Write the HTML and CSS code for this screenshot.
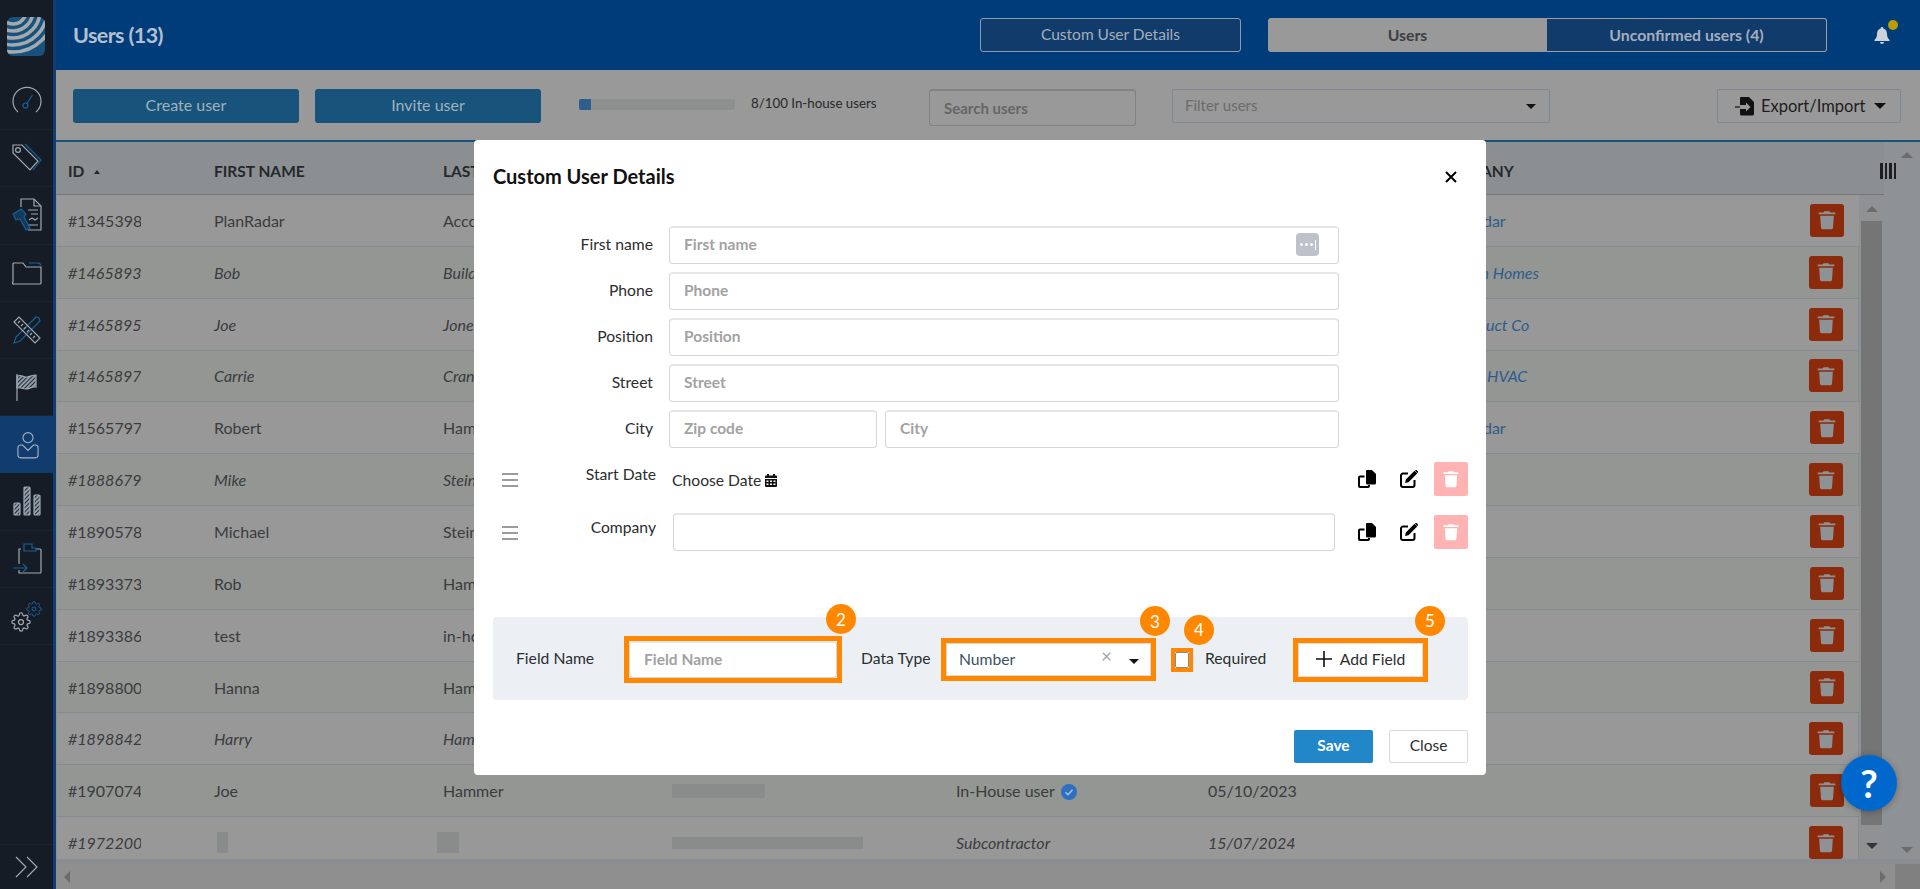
FILE: index.html
```html
<!DOCTYPE html>
<html lang="en">
<head>
    <meta charset="UTF-8">
    <title>Users</title>
    <link rel="stylesheet" href="styles.css">
</head>
<body>

    <svg class="icon-defs" width="0" height="0">
        <symbol id="i-trash" viewBox="0 0 24 24">
            <path fill="currentColor" d="M9 1.500h6l1 1.500h6v2.200H2V3h6z"/>
            <path fill="currentColor" d="M3.800 7h16.400l-1 14.200a2.200 2.200 0 0 1-2.200 1.800H7a2.200 2.200 0 0 1-2.200-1.800z"/>
        </symbol>
        <symbol id="i-copy" viewBox="0 0 18 18">
            <path fill="none" stroke="currentColor" stroke-width="2" d="M6.500 6.500H2a1 1 0 0 0-1 1V16a1 1 0 0 0 1 1h8a1 1 0 0 0 1-1v-1"/>
            <path fill="currentColor" d="M8 1a1 1 0 0 1 1-1h5l4 4v9a1.500 1.500 0 0 1-1.500 1.500H9.500A1.500 1.500 0 0 1 8 13z"/>
        </symbol>
        <symbol id="i-edit" viewBox="0 0 18 18">
            <path fill="none" stroke="currentColor" stroke-width="2" d="M8 3.500H3a2 2 0 0 0-2 2V15a2 2 0 0 0 2 2h9.500a2 2 0 0 0 2-2v-5"/>
            <path fill="currentColor" d="M14.500 0.800l2.700 2.700-8.700 8.700-3.400 0.700 0.700-3.400zM15.500 0.200a1 1 0 0 1 1.300 0l1 1a1 1 0 0 1 0 1.300l-0.600 0.400-2.300-2.300z"/>
        </symbol>
        <symbol id="i-gear" viewBox="0 0 24 24">
            <path fill="none" stroke="currentColor" stroke-width="1.500" d="M19.400 15a1.650 1.650 0 0 0 .33 1.820l.06.06a2 2 0 0 1 0 2.830 2 2 0 0 1-2.830 0l-.06-.06a1.650 1.650 0 0 0-1.820-.33 1.650 1.650 0 0 0-1 1.510V21a2 2 0 0 1-2 2 2 2 0 0 1-2-2v-.09A1.650 1.650 0 0 0 9 19.400a1.650 1.650 0 0 0-1.820.33l-.06.06a2 2 0 0 1-2.830 0 2 2 0 0 1 0-2.830l.06-.06a1.650 1.650 0 0 0 .33-1.820 1.650 1.650 0 0 0-1.510-1H3a2 2 0 0 1-2-2 2 2 0 0 1 2-2h.09A1.650 1.650 0 0 0 4.600 9a1.650 1.650 0 0 0-.33-1.820l-.06-.06a2 2 0 0 1 0-2.830 2 2 0 0 1 2.830 0l.06.06a1.650 1.650 0 0 0 1.820.33H9a1.650 1.650 0 0 0 1-1.510V3a2 2 0 0 1 2-2 2 2 0 0 1 2 2v.09a1.650 1.650 0 0 0 1 1.510 1.650 1.650 0 0 0 1.820-.33l.06-.06a2 2 0 0 1 2.830 0 2 2 0 0 1 0 2.830l-.06.06a1.650 1.650 0 0 0-.33 1.820V9a1.650 1.650 0 0 0 1.510 1H21a2 2 0 0 1 2 2 2 2 0 0 1-2 2h-.09a1.650 1.650 0 0 0-1.510 1z"/>
            <circle fill="none" stroke="currentColor" stroke-width="1.500" cx="12" cy="12" r="3"/>
        </symbol>
    </svg>

    <div class="app">
        <!-- SIDEBAR -->
        <nav class="sidebar">
            <div class="logo">
                <svg viewBox="0 0 38 39" width="38" height="39">
                    <clipPath id="logo-clip"><rect width="38" height="39" rx="6"/></clipPath>
                    <g clip-path="url(#logo-clip)">
                        <rect width="38" height="39" fill="#17527f"/>
                        <g fill="none" stroke="#a4a9ad" stroke-width="3.600">
                            <circle cx="6" cy="-6" r="13"/>
                            <circle cx="6" cy="-6" r="20"/>
                            <circle cx="6" cy="-6" r="27"/>
                            <circle cx="6" cy="-6" r="34"/>
                            <circle cx="6" cy="-6" r="41"/>
                        </g>
                    </g>
                </svg>
            </div>
            <a class="nav-item">
                <svg viewBox="0 0 30 30" width="30" height="30" fill="none" stroke="#a3a8ae" stroke-width="1.200">
                    <path d="M6 26a14 14 0 1 1 18 0"/>
                    <path stroke="#17609a" d="M14.500 18l6-9"/>
                    <circle stroke="#17609a" cx="13.500" cy="19.500" r="2.500"/>
                </svg>
            </a>
            <a class="nav-item">
                <svg viewBox="0 0 32 30" width="32" height="30" fill="none" stroke="#a3a8ae" stroke-width="1.200">
                    <path d="M2 2h9l16 16-8 9L2 10z"/>
                    <circle cx="7" cy="7" r="2.400"/>
                    <path stroke="#17609a" d="M14 1l16 16-8 10"/>
                </svg>
            </a>
            <a class="nav-item">
                <svg viewBox="0 0 32 34" width="32" height="34" fill="none" stroke="#a3a8ae" stroke-width="1.200">
                    <path d="M10 9V1h13l7 7v24H17"/>
                    <path d="M23 1v7h7M17 12h10M20 16h7M17 27h10"/>
                    <path d="M18 22l3-2 3 2 3-2"/>
                    <path stroke="#17609a" fill="#17609a" fill-opacity=".45" d="M2 16l8-5 5 5-2 3 6 11-4 2-6-11-4 1z"/>
                </svg>
            </a>
            <a class="nav-item">
                <svg viewBox="0 0 30 24" width="30" height="24" fill="none" stroke="#a3a8ae" stroke-width="1.200">
                    <path d="M1 21V3a1 1 0 0 1 1-1h9l3 4h15v16a1 1 0 0 1-1 1H2a1 1 0 0 1-1-2z"/>
                    <path stroke="#17609a" d="M17 2h10l2 2"/>
                </svg>
            </a>
            <a class="nav-item">
                <svg viewBox="0 0 30 30" width="30" height="30" fill="none" stroke-width="1.200">
                    <g stroke="#17609a">
                        <path d="M2 28l6-2L28 6l-1-3-3-1L4 22z"/>
                    </g>
                    <g stroke="#a3a8ae">
                        <path d="M2 7l5-5 21 21-5 5z"/>
                        <path d="M8 6l-2 2M11 9l-2 2M14 12l-2 2M17 15l-2 2M20 18l-2 2M23 21l-2 2"/>
                    </g>
                </svg>
            </a>
            <a class="nav-item">
                <svg viewBox="0 0 24 28" width="24" height="28" fill="none" stroke="#a3a8ae" stroke-width="1.200">
                    <pattern id="hatch" width="3" height="3" patternUnits="userSpaceOnUse" patternTransform="rotate(45)"><rect width="1.500" height="3" fill="#17609a"/></pattern>
                    <path d="M2 1v27"/>
                    <path fill="url(#hatch)" d="M2 3c6-2 6 2 10 1s6-2 9-2v12c-4-1-6 2-10 2s-5-2-9-1z"/>
                </svg>
            </a>
            <a class="nav-item active">
                <svg viewBox="0 0 24 30" width="22" height="28" fill="none" stroke="#a9b4c2" stroke-width="1.200">
                    <circle cx="12" cy="7" r="5.500"/>
                    <path d="M6 15H4a3 3 0 0 0-3 3v8a3 3 0 0 0 3 3h16a3 3 0 0 0 3-3v-8a3 3 0 0 0-3-3h-2l-6 6z"/>
                </svg>
            </a>
            <a class="nav-item">
                <svg viewBox="0 0 28 30" width="28" height="30" fill="none" stroke="#a3a8ae" stroke-width="1.200">
                    <pattern id="hatch2" width="3" height="3" patternUnits="userSpaceOnUse" patternTransform="rotate(45)"><rect width="1.500" height="3" fill="#17609a"/></pattern>
                    <rect x="1" y="17" width="6" height="12" rx="1" fill="url(#hatch2)"/>
                    <rect x="11" y="1" width="6" height="28" rx="1" fill="url(#hatch2)"/>
                    <rect x="21" y="9" width="6" height="20" rx="1" fill="url(#hatch2)"/>
                </svg>
            </a>
            <a class="nav-item">
                <svg viewBox="0 0 30 32" width="30" height="32" fill="none" stroke="#a3a8ae" stroke-width="1.200">
                    <path d="M9 6H7v15M7 27v3h21a1 1 0 0 0 1-1V7a1 1 0 0 0-1-1h-4"/>
                    <path stroke="#17609a" d="M12 5V1h8v4h4v3H12zM1 25h14M11 21l4 4-4 4"/>
                </svg>
            </a>
            <a class="nav-item nav-gear">
                <svg class="gear-big" width="20" height="20"><use href="#i-gear"/></svg>
                <svg class="gear-small" width="16" height="16"><use href="#i-gear"/></svg>
            </a>
            <a class="nav-expand">
                <svg viewBox="0 0 24 22" width="24" height="22" fill="none" stroke="#a3a8ae" stroke-width="1.200">
                    <path d="M1 1l10 10L1 21M12 1l10 10-10 10"/>
                </svg>
            </a>
        </nav>

        <main class="main">
            <!-- HEADER -->
            <header class="topbar">
                <h1 class="page-title">Users (13)</h1>
                <button class="top-btn details-btn">Custom User Details</button>
                <div class="tabs">
                    <button class="tab tab-on">Users</button>
                    <button class="tab">Unconfirmed users (4)</button>
                </div>
                <div class="bell">
                    <svg viewBox="0 0 16 17" width="16" height="17">
                        <path fill="#ced3d9" d="M8 0a1.300 1.300 0 0 1 1.300 1.400C12 2 13 4.300 13 7c0 3 1 4.500 2.500 6v1H.5v-1C2 11.500 3 10 3 7c0-2.700 1-5 3.700-5.600A1.300 1.300 0 0 1 8 0zM6 15h4a2 2 0 0 1-4 0z"/>
                    </svg>
                    <span class="bell-dot"></span>
                </div>
            </header>

            <!-- TOOLBAR -->
            <div class="toolbar">
                <button class="act-btn">Create user</button>
                <button class="act-btn">Invite user</button>
                <div class="quota-bar"><span class="quota-fill" style="width: 8%"></span></div>
                <span class="quota-text">8/100 In-house users</span>
                <div class="search">Search users</div>
                <div class="filter">Filter users <i class="caret"></i></div>
                <button class="export-btn">
                    <svg viewBox="0 0 20 20" width="20" height="20">
                        <path fill="#111" d="M6 1h8l5 5v12a1.500 1.500 0 0 1-1.500 1.500h-11A1.500 1.500 0 0 1 5 18v-5h6v2.500L15.500 11 11 6.500V9H5V2a1 1 0 0 1 1-1z"/>
                        <path stroke="#111" stroke-width="1.200" d="M0 11h5"/>
                    </svg>
                    Export/Import <i class="caret caret-big"></i>
                </button>
            </div>

            <!-- TABLE -->
            <div class="table-area">
                <div class="table">
                    <div class="thead row-grid">
                        <div>ID <i class="sort-up"></i></div>
                        <div>FIRST NAME</div>
                        <div>LAST</div>
                        <div></div>
                        <div></div>
                        <div></div>
                        <div>COMPANY</div>
                        <div class="col-toggle"><i></i><i></i><i></i><i></i></div>
                    </div>
                    <div class="tbody">
                        <div class="rows">
                            <div class="row row-grid"><div class="cell-id">#1345398</div><div>PlanRadar</div><div>Account</div><div></div><div></div><div></div><div class="company">PlanRadar</div><div class="cell-del"><button class="del-btn"><svg><use href="#i-trash"/></svg></button></div></div>
                            <div class="row row-grid pending"><div class="cell-id">#1465893</div><div>Bob</div><div>Builder</div><div></div><div></div><div></div><div class="company">Hamton Homes</div><div class="cell-del"><button class="del-btn"><svg><use href="#i-trash"/></svg></button></div></div>
                            <div class="row row-grid pending"><div class="cell-id">#1465895</div><div>Joe</div><div>Jones</div><div></div><div></div><div></div><div class="company">Tri Product Co</div><div class="cell-del"><button class="del-btn"><svg><use href="#i-trash"/></svg></button></div></div>
                            <div class="row row-grid pending"><div class="cell-id">#1465897</div><div>Carrie</div><div>Crane</div><div></div><div></div><div></div><div class="company">Crane's HVAC</div><div class="cell-del"><button class="del-btn"><svg><use href="#i-trash"/></svg></button></div></div>
                            <div class="row row-grid"><div class="cell-id">#1565797</div><div>Robert</div><div>Hammer</div><div></div><div></div><div></div><div class="company">PlanRadar</div><div class="cell-del"><button class="del-btn"><svg><use href="#i-trash"/></svg></button></div></div>
                            <div class="row row-grid pending"><div class="cell-id">#1888679</div><div>Mike</div><div>Stein</div><div></div><div></div><div></div><div></div><div class="cell-del"><button class="del-btn"><svg><use href="#i-trash"/></svg></button></div></div>
                            <div class="row row-grid"><div class="cell-id">#1890578</div><div>Michael</div><div>Stein</div><div></div><div></div><div></div><div></div><div class="cell-del"><button class="del-btn"><svg><use href="#i-trash"/></svg></button></div></div>
                            <div class="row row-grid"><div class="cell-id">#1893373</div><div>Rob</div><div>Hammer</div><div></div><div></div><div></div><div></div><div class="cell-del"><button class="del-btn"><svg><use href="#i-trash"/></svg></button></div></div>
                            <div class="row row-grid"><div class="cell-id">#1893386</div><div>test</div><div>in-house</div><div></div><div></div><div></div><div></div><div class="cell-del"><button class="del-btn"><svg><use href="#i-trash"/></svg></button></div></div>
                            <div class="row row-grid"><div class="cell-id">#1898800</div><div>Hanna</div><div>Hammer</div><div></div><div></div><div></div><div></div><div class="cell-del"><button class="del-btn"><svg><use href="#i-trash"/></svg></button></div></div>
                            <div class="row row-grid pending"><div class="cell-id">#1898842</div><div>Harry</div><div>Hammer</div><div></div><div></div><div></div><div></div><div class="cell-del"><button class="del-btn"><svg><use href="#i-trash"/></svg></button></div></div>
                            <div class="row row-grid"><div class="cell-id">#1907074</div><div>Joe</div><div>Hammer</div><div><span class="blur blur-mail"></span></div><div class="role">In-House user
                                <svg viewBox="0 0 16 16" width="16" height="16"><circle cx="8" cy="8" r="8" fill="#2e6fc0"/><path d="M4.500 8.200l2.500 2.500 4.500-5" fill="none" stroke="#a9c2de" stroke-width="1.500"/></svg>
                            </div><div>05/10/2023</div><div></div><div class="cell-del"><button class="del-btn"><svg><use href="#i-trash"/></svg></button></div></div>
                            <div class="row row-grid pending"><div class="cell-id">#1972200</div><div><span class="blur blur-first"></span></div><div><span class="blur blur-last"></span></div><div><span class="blur blur-long"></span></div><div>Subcontractor</div><div>15/07/2024</div><div></div><div class="cell-del"><button class="del-btn"><svg><use href="#i-trash"/></svg></button></div></div>
                        </div>
                        <div class="vscroll">
                            <i class="arrow-up"></i>
                            <span class="vthumb"></span>
                            <i class="arrow-down dark"></i>
                        </div>
                    </div>
                </div>
                <div class="outer-scroll">
                    <i class="arrow-up"></i>
                    <i class="arrow-down"></i>
                </div>
            </div>
            <div class="hscroll">
                <i class="arrow-left"></i>
                <i class="arrow-right"></i>
                <span class="corner"></span>
            </div>
        </main>
    </div>

    <!-- MODAL -->
    <div class="modal">
        <div class="modal-head">
            <h2>Custom User Details</h2>
            <svg class="modal-x" viewBox="0 0 12 12" width="12" height="12"><path d="M1 1l10 10M11 1L1 11" stroke="#000" stroke-width="2"/></svg>
        </div>

        <div class="form-row">
            <label>First name</label>
            <div class="input-wrap">
                <input class="field" type="text" placeholder="First name">
                <span class="pass-key"><i></i><i></i><i></i><b></b></span>
            </div>
        </div>
        <div class="form-row"><label>Phone</label><input class="field" type="text" placeholder="Phone"></div>
        <div class="form-row"><label>Position</label><input class="field" type="text" placeholder="Position"></div>
        <div class="form-row"><label>Street</label><input class="field" type="text" placeholder="Street"></div>
        <div class="form-row">
            <label>City</label>
            <input class="field zip" type="text" placeholder="Zip code">
            <input class="field" type="text" placeholder="City">
        </div>

        <div class="custom-row date-row">
            <span class="handle"><i></i><i></i><i></i></span>
            <label>Start Date</label>
            <span class="choose-date">Choose Date
                <svg viewBox="0 0 12 13" width="12" height="13"><path fill="#111" d="M2 0h2v1.500h4V0h2v1.500h1a1 1 0 0 1 1 1V4H0V2.500a1 1 0 0 1 1-1h1zM0 5h12v7a1 1 0 0 1-1 1H1a1 1 0 0 1-1-1zm1.500 1.500v1.500h2V6.500zm3.500 0v1.500h2V6.500zm3.500 0v1.500h2V6.500zM1.500 9.500V11h2V9.500zm3.500 0V11h2V9.500zm3.500 0V11h2V9.500z"/></svg>
            </span>
            <div class="row-actions">
                <svg width="18" height="18"><use href="#i-copy"/></svg>
                <svg width="18" height="18"><use href="#i-edit"/></svg>
                <button class="soft-del"><svg width="18" height="18"><use href="#i-trash"/></svg></button>
            </div>
        </div>
        <div class="custom-row company-row">
            <span class="handle"><i></i><i></i><i></i></span>
            <label>Company</label>
            <input class="field" type="text">
            <div class="row-actions">
                <svg width="18" height="18"><use href="#i-copy"/></svg>
                <svg width="18" height="18"><use href="#i-edit"/></svg>
                <button class="soft-del"><svg width="18" height="18"><use href="#i-trash"/></svg></button>
            </div>
        </div>

        <!-- ADD FIELD -->
        <div class="add-panel">
            <span class="lbl-name">Field Name</span>
            <div class="mark mark-name">
                <input class="field" type="text" placeholder="Field Name">
                <span class="badge">2</span>
            </div>
            <span class="lbl-type">Data Type</span>
            <div class="mark mark-type">
                <div class="select">Number <span class="clear">×</span> <i class="caret"></i></div>
                <span class="badge">3</span>
            </div>
            <div class="mark mark-check">
                <span class="check"></span>
                <span class="badge badge-side">4</span>
            </div>
            <span class="lbl-req">Required</span>
            <div class="mark mark-add">
                <button class="add-btn">
                    <svg viewBox="0 0 16 16" width="16" height="16"><path d="M8 0v16M0 8h16" stroke="#111" stroke-width="1.600"/></svg>
                    Add Field
                </button>
                <span class="badge badge-add">5</span>
            </div>
        </div>

        <div class="modal-foot">
            <button class="save-btn">Save</button>
            <button class="close-btn">Close</button>
        </div>
    </div>

    <!-- HELP -->
    <button class="help">?</button>

</body>
</html>
```

FILE: styles.css
```css
* {
    box-sizing: border-box;
}

body {
    margin: 0;
    height: 889px;
    overflow: hidden;
    font-family: "Lato", sans-serif;
    font-size: 16px;
    color: #3a3c3e;
    background: #999;
}

button {
    font-family: inherit;
}

.icon-defs {
    position: absolute;
}

.app {
    display: flex;
    height: 889px;
}

/* SIDEBAR */
.sidebar {
    width: 56px;
    flex: none;
    display: flex;
    flex-direction: column;
    background: #151c26;
    border-right: 3px solid #103f73;
}

.logo {
    height: 73px;
    padding: 17px 0 0 7px;
    flex: none;
}

.nav-item {
    position: relative;
    height: 57.200px;
    flex: none;
    display: flex;
    align-items: center;
    justify-content: center;
    border-bottom: 1px solid #1c232d;
}

.nav-item.active {
    background: #103c6e;
    margin-right: -3px;
    border-bottom: none;
}

.gear-big {
    position: absolute;
    left: 11px;
    top: 24px;
    color: #a3a8ae;
}

.gear-small {
    position: absolute;
    left: 26px;
    top: 13px;
    color: #17609a;
}

.nav-expand {
    margin-top: auto;
    height: 45px;
    display: flex;
    align-items: center;
    justify-content: center;
    border-top: 1px solid #1c232d;
}

.main {
    flex: 1;
    min-width: 0;
    display: flex;
    flex-direction: column;
}

/* HEADER */
.topbar {
    height: 70px;
    flex: none;
    display: flex;
    align-items: center;
    padding-left: 17px;
    background: #003c7a;
}

.page-title {
    margin: 0;
    font-size: 21.500px;
    font-weight: 700;
    color: #b4c0ce;
    letter-spacing: -0.6px;
    width: 907px;
}

.top-btn {
    width: 261px;
    height: 34px;
    padding-bottom: 3px;
    font-size: 15.500px;
    color: #a4aeb9;
    background: #113b6b;
    border: 1px solid #8b9cb0;
    border-radius: 3px;
}

.tabs {
    display: flex;
    margin-left: 27px;
    height: 34px;
    width: 559px;
}

.tab {
    flex: 1;
    padding-bottom: 3px;
    font-size: 15.800px;
    font-weight: 700;
    color: #a3afbd;
    background: #113b6b;
    border: 1px solid #9a9fa6;
    border-left: none;
    border-radius: 0 3px 3px 0;
}

.tab.tab-on {
    color: #3a3f46;
    background: #999;
    border: none;
    border-radius: 3px 0 0 3px;
}

.bell {
    position: relative;
    margin-left: 47px;
    height: 17px;
}

.bell svg {
    display: block;
}

.bell-dot {
    position: absolute;
    top: -7px;
    left: 14px;
    width: 10px;
    height: 10px;
    border-radius: 50%;
    background: #b89e00;
}

/* TOOLBAR */
.toolbar {
    height: 70px;
    flex: none;
    display: flex;
    padding: 19px 0 0 17px;
    background: #999;
}

.act-btn {
    width: 226px;
    height: 34px;
    margin-right: 16px;
    padding-bottom: 4px;
    font-size: 16px;
    color: #a0b2bf;
    background: #17537a;
    border: none;
    border-radius: 3px;
}

.quota-bar {
    width: 156px;
    height: 11px;
    margin: 10px 0 0 22px;
    background: #8d908e;
    border-radius: 2px;
    overflow: hidden;
}

.quota-fill {
    display: block;
    height: 100%;
    background: #2e5f8c;
}

.quota-text {
    margin: 6px 0 0 16px;
    width: 178px;
    font-size: 13.300px;
    color: #26282a;
}

.search {
    width: 207px;
    height: 37px;
    padding: 8px 14px;
    font-size: 15px;
    font-weight: 700;
    color: #666;
    border: 1px solid #808285;
    border-top-width: 2px;
    border-radius: 3px;
}

.filter {
    position: relative;
    width: 378px;
    height: 34px;
    margin-left: 36px;
    padding: 6px 12px;
    font-size: 15px;
    color: #6b6b6b;
    border: 1px solid #7f8794;
    border-radius: 2px;
}

.caret {
    display: inline-block;
    border: 5px solid transparent;
    border-top: 5px solid #111;
    border-bottom: none;
}

.filter .caret {
    position: absolute;
    right: 13px;
    top: 14px;
}

.export-btn {
    display: flex;
    align-items: center;
    gap: 6px;
    width: 184px;
    height: 34px;
    margin-left: 167px;
    padding: 0 0 1px 17px;
    font-size: 16.500px;
    color: #1d1e20;
    background: none;
    border: 1px solid #7f8794;
    border-radius: 2px;
}

.caret-big {
    margin-left: 3px;
    border-width: 6px;
    border-top-width: 6px;
}

/* TABLE */
.table-area {
    flex: 1;
    min-height: 0;
    display: flex;
    border-top: 2px solid #17537a;
}

.table {
    width: 1828px;
    flex: none;
    display: flex;
    flex-direction: column;
    background: #959695;
}

.row-grid {
    display: grid;
    grid-template-columns: 146px 229px 229px 284px 252px 227px 118px 1fr;
    align-items: center;
}

.thead {
    height: 53px;
    flex: none;
    padding: 6px 0 0 12px;
    font-size: 15.500px;
    font-weight: 700;
    color: #25282b;
    background: #8b8f92;
    border-bottom: 1px solid #73777b;
}

.sort-up {
    display: inline-block;
    margin: 0 0 3px 6px;
    border: 3px solid transparent;
    border-bottom: 4px solid #25282b;
    border-top: none;
}

.col-toggle {
    position: relative;
    z-index: 1;
    display: flex;
    gap: 2px;
    justify-content: flex-end;
    margin-right: -12px;
}

.col-toggle i {
    width: 2.500px;
    height: 16px;
    background: #1c1e20;
}

.tbody {
    flex: 1;
    min-height: 0;
    display: flex;
}

.rows {
    width: 1803px;
    flex: none;
    overflow: hidden;
}

.row {
    height: 51.850px;
    padding-left: 11px;
    border-left: 1px solid #8b9097;
    border-bottom: 1px solid #858b93;
    background: #989898;
    color: #3a3c3e;
    white-space: nowrap;
}

.row:nth-child(even) {
    background: #949694;
}

.row.pending {
    font-style: italic;
    border-right: 1px solid #858b93;
}

.cell-id {
    width: 73px;
    overflow: hidden;
}

.cell-del {
    display: flex;
    justify-content: flex-end;
    padding-right: 15px;
}

.company {
    color: #2d5c8c;
}

.del-btn {
    display: flex;
    align-items: center;
    justify-content: center;
    width: 34px;
    height: 33px;
    padding: 0;
    color: #8f9295;
    background: #8c2a0c;
    border: none;
    border-radius: 3px;
}

.del-btn svg {
    width: 20px;
    height: 20px;
}

.blur {
    display: block;
    background: #8a8c8c;
    height: 21px;
}

.blur-first {
    width: 11px;
    margin-left: 3px;
}

.blur-last {
    width: 22px;
    margin-left: -6px;
}

.blur-mail {
    width: 93px;
    height: 14px;
}

.blur-long {
    width: 191px;
    height: 12px;
}

.role svg {
    vertical-align: -3px;
    margin-left: 2px;
}

.vscroll {
    flex: 1;
    position: relative;
    background: #8f9193;
}

.vthumb {
    position: absolute;
    left: 2px;
    right: 2px;
    top: 26px;
    bottom: 34px;
    background: #757575;
}

.arrow-up,
.arrow-down {
    position: absolute;
    left: 12.500px;
    margin-left: -6px;
    border: 6px solid transparent;
}

.arrow-up {
    top: 11px;
    border-bottom: 6px solid #6b6b6b;
    border-top: none;
}

.arrow-down {
    bottom: 10px;
    border-top: 6px solid #6b6b6b;
    border-bottom: none;
}

.arrow-down.dark {
    border-top-color: #333;
}

.outer-scroll {
    flex: 1;
    position: relative;
    background: #8f9295;
}

.outer-scroll .arrow-up {
    top: 10px;
    left: 23px;
}

.outer-scroll .arrow-down {
    bottom: 6px;
    left: 23px;
}

.hscroll {
    height: 30px;
    flex: none;
    position: relative;
    background: #8f8f8f;
    border-top: 5px solid #8a8e92;
}

.arrow-left,
.arrow-right {
    position: absolute;
    top: 7px;
    border: 6px solid transparent;
}

.arrow-left {
    left: 8px;
    border-right: 6px solid #6b6b6b;
    border-left: none;
}

.arrow-right {
    right: 34px;
    border-left: 6px solid #6b6b6b;
    border-right: none;
}

.corner {
    position: absolute;
    right: 0;
    top: 0;
    bottom: 0;
    width: 25px;
    background: #808080;
}

/* MODAL */
.modal {
    position: absolute;
    left: 474px;
    top: 140px;
    width: 1012px;
    height: 635px;
    padding: 0 18px 0 19px;
    background: #fff;
    border-radius: 4px;
    font-size: 15.700px;
    color: #2b2d2f;
}

.modal-head {
    height: 86px;
    display: flex;
    justify-content: space-between;
    padding-top: 23px;
}

.modal-head h2 {
    margin: 0;
    font-size: 20px;
    font-weight: 700;
    line-height: 26px;
    color: #111;
}

.modal-x {
    margin: 8px 11px 0 0;
}

.form-row {
    display: flex;
    align-items: center;
    gap: 8px;
    height: 38px;
    margin-bottom: 8px;
    padding-right: 129px;
}

.form-row label {
    width: 160px;
    margin-right: 8px;
    padding-bottom: 2px;
    text-align: right;
    flex: none;
}

.field {
    flex: 1;
    min-width: 0;
    height: 38px;
    padding: 0 14px 3px;
    font-family: inherit;
    font-size: 15.500px;
    color: #2b2d2f;
    background: #fff;
    border: 1px solid #d6d6d6;
    border-top: 2px solid #e6e6e6;
    border-radius: 4px;
    outline: none;
}

.field::placeholder {
    color: #a2a2a2;
    font-weight: 700;
    opacity: 1;
}

.input-wrap {
    position: relative;
    flex: 1;
    display: flex;
}

.zip {
    flex: none;
    width: 208px;
}

.pass-key {
    position: absolute;
    right: 20px;
    top: 7px;
    width: 23px;
    height: 23px;
    display: flex;
    align-items: center;
    justify-content: center;
    gap: 2px;
    background: #bcc1ca;
    border-radius: 4px;
}

.pass-key i {
    width: 3px;
    height: 3px;
    border-radius: 50%;
    background: #fff;
}

.pass-key b {
    width: 1px;
    height: 10px;
    background: #fff;
}

.custom-row {
    display: flex;
    height: 34px;
}

.date-row {
    margin-top: 14px;
}

.company-row {
    height: 38px;
    margin-top: 17px;
}

.handle {
    display: flex;
    flex-direction: column;
    gap: 4px;
    width: 16px;
    margin: 11px 0 0 9px;
    flex: none;
}

.company-row .handle {
    margin-top: 13px;
}

.handle i {
    height: 2px;
    background: #9c9c9c;
}

.custom-row label {
    width: 138px;
    flex: none;
    text-align: right;
    margin-right: 16px;
    line-height: 24px;
}

.company-row label {
    padding-top: 2px;
}

.choose-date {
    padding-top: 6px;
    line-height: 24px;
}

.choose-date svg {
    vertical-align: -1px;
}

.company-row .field {
    flex: none;
    width: 662px;
    margin-left: 1px;
}

.row-actions {
    margin-left: auto;
    display: flex;
    align-items: center;
    color: #000;
}

.row-actions svg:nth-child(2) {
    margin: 0 16px 0 24px;
}

.soft-del {
    display: flex;
    align-items: center;
    justify-content: center;
    width: 34px;
    height: 34px;
    padding: 0;
    color: #fff;
    background: #ffb3b3;
    border: none;
    border-radius: 2px;
}

/* ADD FIELD */
.add-panel {
    display: flex;
    align-items: center;
    height: 83px;
    margin-top: 66px;
    padding: 0 0 1px 23px;
    background: #ecf0f4;
    border-radius: 4px;
}

.lbl-name {
    width: 108px;
    flex: none;
}

.lbl-type {
    width: 80px;
    margin-left: 19px;
    flex: none;
}

.lbl-req {
    width: 88px;
    margin-left: 12px;
    flex: none;
}

.mark {
    position: relative;
    flex: none;
    display: flex;
    border: 5px solid #ff8800;
    margin-top: 3px;
}

.mark-name {
    width: 218px;
    height: 47px;
}

.mark-name .field {
    height: 100%;
}

.mark-type {
    width: 215px;
    height: 43px;
}

.select {
    position: relative;
    width: 100%;
    padding: 6px 12px;
    color: #3d5166;
    background: #fff;
    border: 1px solid #d4d9de;
}

.clear {
    position: absolute;
    right: 38px;
    top: 0;
    font-size: 19px;
    color: #a8a8a8;
}

.select .caret {
    position: absolute;
    right: 11px;
    top: 15px;
}

.mark-check {
    width: 22px;
    height: 24px;
    margin-left: 15px;
    border-width: 4px;
}

.check {
    width: 100%;
    background: #fff;
    border: 1px solid #8a8a8a;
    border-radius: 2px;
}

.mark-add {
    width: 135px;
    height: 44px;
}

.add-btn {
    width: 100%;
    display: flex;
    align-items: center;
    justify-content: center;
    gap: 8px;
    padding-bottom: 2px;
    font-size: 15.700px;
    color: #2b2d2f;
    background: #fff;
    border: 1px solid #d8dde2;
}

.badge {
    position: absolute;
    right: -19px;
    top: -37px;
    width: 30px;
    height: 30px;
    display: flex;
    align-items: center;
    justify-content: center;
    font-size: 17px;
    color: #fff;
    background: #ff8800;
    border-radius: 50%;
}

.badge-side {
    right: -25px;
}

.badge-add {
    right: -22px;
}

.modal-foot {
    display: flex;
    justify-content: flex-end;
    gap: 16px;
    margin-top: 30px;
}

.save-btn,
.close-btn {
    width: 79px;
    height: 33px;
    padding-bottom: 4px;
    font-size: 15.500px;
    border-radius: 2px;
}

.save-btn {
    font-weight: 700;
    color: #fff;
    background: #2287c9;
    border: none;
}

.close-btn {
    color: #2b2d2f;
    background: #fff;
    border: 1px solid #d5dbe1;
}

/* HELP */
.help {
    position: absolute;
    left: 1841px;
    top: 755px;
    width: 56px;
    height: 56px;
    padding: 0;
    font-size: 38px;
    font-weight: 700;
    line-height: 56px;
    color: #fff;
    background: #0068cc;
    border: none;
    border-radius: 50%;
    box-shadow: 0 1px 6px rgba(0,0,0,0.3);
}
```
